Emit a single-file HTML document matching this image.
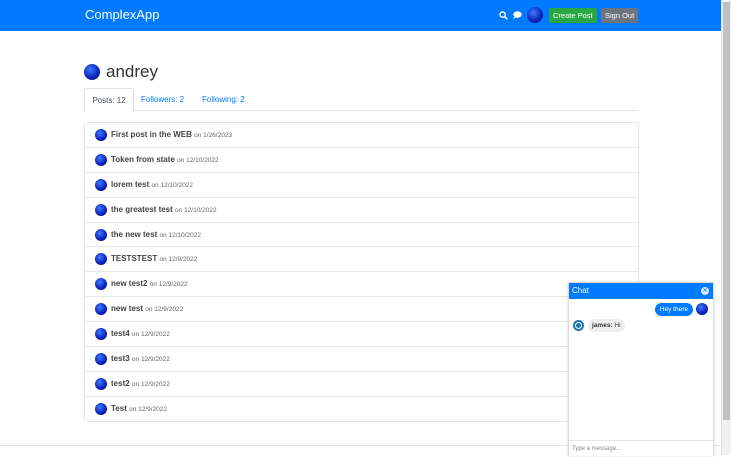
<!DOCTYPE html><html><head><style>
body{margin:0;width:731px;height:455px;overflow:hidden;font-family:"Liberation Sans",sans-serif;background:#fff;position:relative}
.sb{position:absolute;right:0;top:0;width:9px;height:455px;background:#f1f1f1;border-left:1px solid #e0e0e0}
.sb div{position:absolute;left:1px;top:2px;width:7px;height:418px;background:#c1c1c1}
.nav{position:absolute;left:0;top:0;width:722px;height:31px;background:#007bff}
.brand{position:absolute;left:85px;top:7px;color:#fff;font-size:13px}
.av{display:inline-block;border-radius:50%;background:radial-gradient(circle at 40% 35%,#3d7bff,#0a1fb8 60%,#06106a)}
.btn{position:absolute;top:8px;height:15px;line-height:15px;font-size:7.5px;color:#fff;border-radius:2px;padding:0 4px}
.tabs{position:absolute;left:84px;top:88px;width:554px;height:22px;border-bottom:1px solid #dee2e6;font-size:8px}
.tab{position:absolute;top:0;height:22px;line-height:23px;color:#007bff}
.list{position:absolute;left:84px;top:122px;width:553px;border:1px solid #e3e6e9;border-radius:3px}
.row{height:23.9px;border-top:1px solid #e8e8e8;position:relative;font-size:8px;color:#333}
.row:first-child{border-top:none}
.row .av{position:absolute;left:10px;top:6px;width:12px;height:12px}
.row b{position:absolute;left:26px;top:7px;color:#444}
.row small{font-weight:normal;font-size:6.5px;color:#666}
.chat{position:absolute;left:568px;top:282px;width:144px;height:173px;background:#fff;border:1px solid #ddd;border-bottom:none;box-shadow:0 0 3px rgba(0,0,0,.15)}
</style></head><body>
<div class="nav"><div class="brand">ComplexApp</div>
<svg style="position:absolute;left:499px;top:11px" width="9" height="9" viewBox="0 0 9 9"><circle cx="3.6" cy="3.6" r="2.6" stroke="#fff" stroke-width="1.4" fill="none"/><path d="M5.5 5.5L8.3 8.3" stroke="#fff" stroke-width="1.6"/></svg>
<svg style="position:absolute;left:513px;top:11px" width="9" height="8" viewBox="0 0 9 8"><ellipse cx="4.5" cy="3.5" rx="4.2" ry="3.2" fill="#fff"/><path d="M1 6L0.5 8L3 6.5Z" fill="#fff"/></svg>
<span class="av" style="position:absolute;left:527px;top:7px;width:16px;height:16px"></span>
<div class="btn" style="left:549px;background:#28a745">Create Post</div>
<div class="btn" style="left:601px;background:#6c757d">Sign Out</div>
</div>
<span class="av" style="position:absolute;left:84px;top:64px;width:16px;height:16px"></span>
<div style="position:absolute;left:106px;top:62px;font-size:17px;color:#333">andrey</div>
<div class="tabs">
<div class="tab" style="left:0;width:48px;border:1px solid #dee2e6;border-bottom:1px solid #fff;border-radius:3px 3px 0 0;color:#495057;text-align:center;background:#fff">Posts: 12</div>
<div class="tab" style="left:57px">Followers: 2</div>
<div class="tab" style="left:118px">Following: 2</div>
</div>
<div class="list">
<div class="row"><span class="av"></span><b>First post in the WEB <small>on 1/26/2023</small></b></div>
<div class="row"><span class="av"></span><b>Token from state <small>on 12/10/2022</small></b></div>
<div class="row"><span class="av"></span><b>lorem test <small>on 12/10/2022</small></b></div>
<div class="row"><span class="av"></span><b>the greatest test <small>on 12/10/2022</small></b></div>
<div class="row"><span class="av"></span><b>the new test <small>on 12/10/2022</small></b></div>
<div class="row"><span class="av"></span><b>TESTSTEST <small>on 12/9/2022</small></b></div>
<div class="row"><span class="av"></span><b>new test2 <small>on 12/9/2022</small></b></div>
<div class="row"><span class="av"></span><b>new test <small>on 12/9/2022</small></b></div>
<div class="row"><span class="av"></span><b>test4 <small>on 12/9/2022</small></b></div>
<div class="row"><span class="av"></span><b>test3 <small>on 12/9/2022</small></b></div>
<div class="row"><span class="av"></span><b>test2 <small>on 12/9/2022</small></b></div>
<div class="row"><span class="av"></span><b>Test <small>on 12/9/2022</small></b></div>
</div>
<div style="position:absolute;left:0;top:445px;width:722px;border-top:1px solid #e5e5e5"></div>
<div class="chat">
<div style="height:16px;background:#007bff;color:#fff;font-size:8px;line-height:16px;padding-left:3px">Chat<span style="position:absolute;right:4px;top:4px;width:8px;height:8px;border-radius:50%;background:#dbe7ff;color:#007bff;font-size:6px;line-height:8px;text-align:center">✕</span></div>
<div style="position:absolute;right:20px;top:20px;background:#007bff;color:#fff;font-size:6.5px;border-radius:7px;padding:3px 5px">Hey there</div>
<span class="av" style="position:absolute;right:5px;top:20px;width:12px;height:12px"></span>
<div style="position:absolute;left:4px;top:37px;width:11px;height:11px;border-radius:50%;background:#1b75bc"><div style="position:absolute;left:2px;top:2px;width:5px;height:5px;border:1px solid #fff;border-radius:50%"></div></div>
<div style="position:absolute;left:19px;top:36px;background:#eee;font-size:6.5px;border-radius:7px;padding:3px 4px;color:#333"><b>james:</b> Hi</div>
<div style="position:absolute;left:0;bottom:0;width:144px;height:16px;border-top:1px solid #e5e5e5;font-size:6px;color:#888;line-height:16px;padding-left:3px;box-sizing:border-box">Type a message...</div>
</div>
<div class="sb"><div></div></div>
</body></html>
